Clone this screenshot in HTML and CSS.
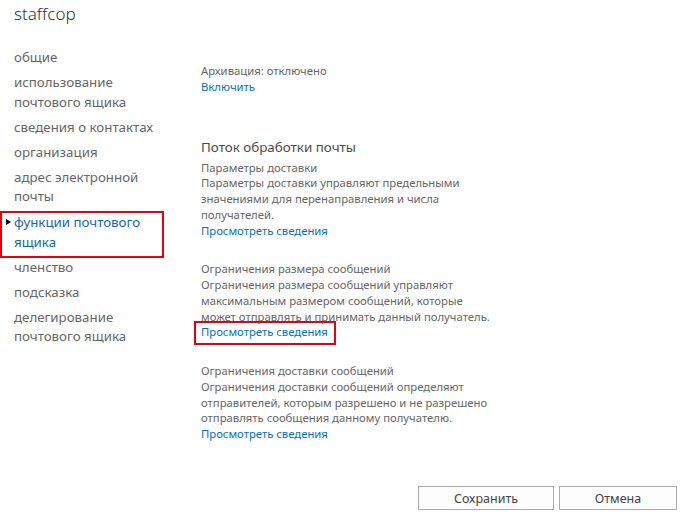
FILE: index.html
```html
<!DOCTYPE html>
<html lang="ru">
<head>
<meta charset="utf-8">
<title>staffcop</title>
<link rel="stylesheet" href="styles.css">
</head>
<body>
<div class="page">
  <div class="title">staffcop</div>
  <div class="main">
    <nav class="nav">
      <a class="nav-item">общие</a>
      <a class="nav-item">использование почтового ящика</a>
      <a class="nav-item">сведения о контактах</a>
      <a class="nav-item">организация</a>
      <a class="nav-item">адрес электронной почты</a>
      <a class="nav-item selected">функции почтового ящика</a>
      <a class="nav-item">членство</a>
      <a class="nav-item">подсказка</a>
      <a class="nav-item">делегирование почтового ящика</a>
    </nav>
    <div class="content">
      <div class="block archive">
        <div class="line">Архивация: отключено</div>
        <a class="link">Включить</a>
      </div>
      <div class="section-title">Поток обработки почты</div>
      <div class="block">
        <div class="line">Параметры доставки</div>
        <div class="desc">Параметры доставки управляют предельными значениями для перенаправления и числа получателей.</div>
        <a class="link">Просмотреть сведения</a>
      </div>
      <div class="block">
        <div class="line">Ограничения размера сообщений</div>
        <div class="desc">Ограничения размера сообщений управляют максимальным размером сообщений, которые может отправлять и принимать данный получатель.</div>
        <a class="link boxed">Просмотреть сведения</a>
      </div>
      <div class="block">
        <div class="line">Ограничения доставки сообщений</div>
        <div class="desc">Ограничения доставки сообщений определяют отправителей, которым разрешено и не разрешено отправлять сообщения данному получателю.</div>
        <a class="link">Просмотреть сведения</a>
      </div>
    </div>
  </div>
  <div class="buttons">
    <button class="btn save">Сохранить</button>
    <button class="btn cancel">Отмена</button>
  </div>
</div>
</body>
</html>
```
FILE: styles.css
```css
html, body {
  margin: 0;
  padding: 0;
  background: #fff;
}
body {
  font-family: "Noto Sans", "Open Sans", sans-serif;
  color: #666;
  width: 680px;
  height: 517px;
  overflow: hidden;
}
.page {
  display: flex;
  flex-direction: column;
  height: 517px;
}
.title {
  font-size: 17px;
  font-weight: 300;
  color: #333;
  padding: 2px 0 0 14px;
  line-height: 24px;
  height: 39px;
}
.main {
  display: flex;
  flex: 1;
}
.nav {
  width: 187px;
  padding-left: 14px;
  display: flex;
  flex-direction: column;
  gap: 5.5px;
  padding-top: 7px;
}
.nav-item {
  font-size: 13.3px;
  line-height: 19.5px;
  color: #666;
  width: 150px;
  display: block;
}
.nav-item.selected {
  color: #0f6ab4;
  position: relative;
  outline: 2px solid #e8000d;
  outline-offset: 0;
  margin-left: -12px;
  padding: 0 8px 4px 12px;
  width: 140px;
  margin-top: 1px;
  margin-bottom: -4px;
}
.nav-item.selected::before {
  content: "";
  position: absolute;
  left: 4px;
  top: 6px;
  border-left: 5px solid #000;
  border-top: 3.5px solid transparent;
  border-bottom: 3.5px solid transparent;
}
.content {
  flex: 1;
  padding-top: 22px;
  font-size: 11.3px;
  line-height: 15.75px;
}
.block {
  margin-bottom: 23px;
  width: 294px;
}
.archive {
  margin-bottom: 42px;
}
.line {
  color: #666;
}
.desc {
  color: #666;
}
.link {
  color: #0072c6;
  display: inline-block;
}
.link.boxed {
  outline: 2px solid #e8000d;
  outline-offset: 0;
  padding: 1px 6px 3px 5px;
  margin: -1px 0 -3px -5px;
}
.section-title {
  font-size: 13.4px;
  line-height: 20px;
  color: #4a4a4a;
  margin-bottom: 3px;
}
.buttons {
  display: flex;
  justify-content: flex-end;
  gap: 5px;
  padding: 0 3px 7px 0;
}
.btn {
  font-family: "Noto Sans", "Open Sans", sans-serif;
  font-size: 12.5px;
  color: #444;
  background: #fdfdfd;
  border: 1px solid #ababab;
  height: 24px;
  padding: 0;
  margin: 0;
}
.save {
  width: 136px;
}
.cancel {
  width: 118px;
}
```
